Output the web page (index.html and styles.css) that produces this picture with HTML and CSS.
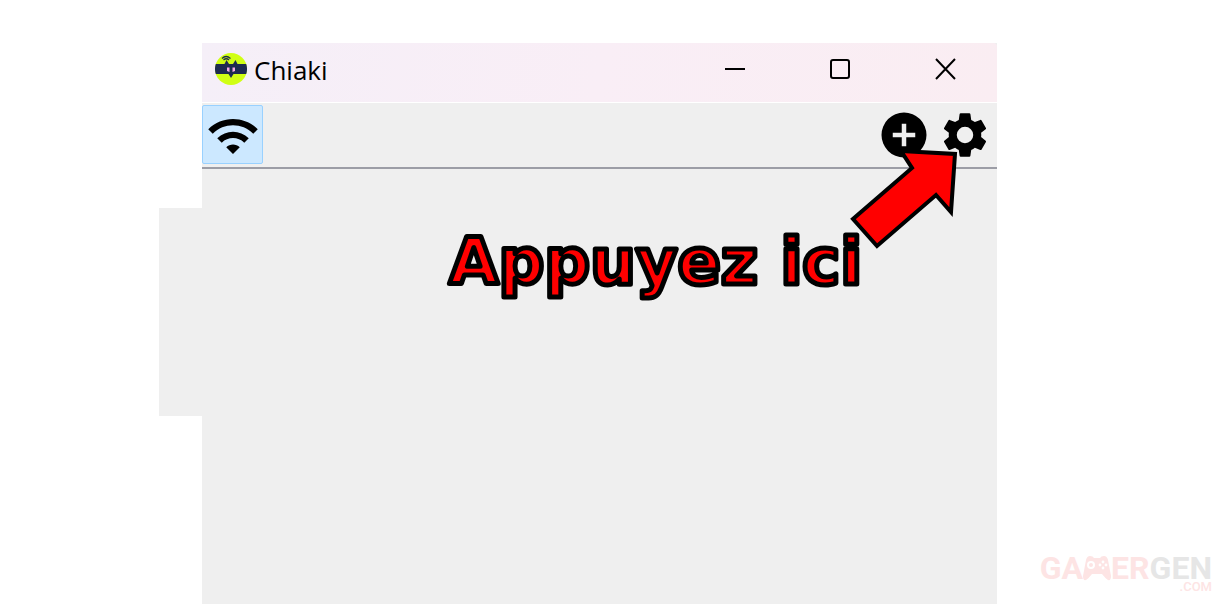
FILE: index.html
```html
<!DOCTYPE html>
<html lang="fr">
<head>
<meta charset="utf-8">
<meta name="viewport" content="width=device-width, initial-scale=1">
<title>Chiaki</title>
<link rel="stylesheet" href="styles.css">
</head>
<body>
<div class="page">
  <div class="margin-left"><div class="tab"></div></div>
  <main class="window">
    <header class="titlebar">
      <svg class="logo" viewBox="0 0 32 32" aria-hidden="true">
        <circle cx="16" cy="16" r="16" fill="#d0ff14"/>
        <path d="M.8 11h8.700l2-4 2.500 4h4l2.500-4 2 4h8.700a16 16 0 0 1 0 10H18.500L16 25l-2.500-4H.8a16 16 0 0 1 0-10z" fill="#1d2b50"/>
        <path d="M12 14.500h2.500V19L12 18zM17.500 14.500H20V18l-2.500 1z" fill="#f4a9e4"/>
        <path d="M7 5.500q4-4 8.500 0M8.500 7q2.700-2.500 5.500 0" fill="none" stroke="#1d2b50" stroke-width="1.200"/>
      </svg>
      <h1 class="title">Chiaki</h1>
      <div class="caption">
        <button class="caption-button" aria-label="Réduire"><svg width="22" height="22" viewBox="0 0 22 22"><path d="M1 11h20" class="line"/></svg></button>
        <button class="caption-button" aria-label="Agrandir"><svg width="22" height="22" viewBox="0 0 22 22"><rect x="2" y="2" width="18" height="18" rx="2" class="line"/></svg></button>
        <button class="caption-button" aria-label="Fermer"><svg width="22" height="22" viewBox="0 0 22 22"><path d="M2 1l19 20M21 1L2 21" class="line"/></svg></button>
      </div>
    </header>
    <div class="toolbar">
      <button class="tool active" aria-label="Découverte"><svg width="54" height="54" viewBox="0 0 24 24"><path d="M1 9l2 2c4.970-4.970 13.030-4.970 18 0l2-2C16.930 2.930 7.080 2.930 1 9zm8 8l3 3 3-3c-1.650-1.660-4.340-1.660-6 0zm-4-4l2 2c2.760-2.760 7.240-2.760 10 0l2-2C15.140 9.140 8.870 9.140 5 13z"/></svg></button>
      <span class="spacer"></span>
      <button class="tool" aria-label="Ajouter"><svg width="54" height="54" viewBox="0 0 24 24"><path d="M12 2a10 10 0 1 0 0 20 10 10 0 0 0 0-20zm5 11h-4v4h-2v-4H7v-2h4V7h2v4h4z"/></svg></button>
      <button class="tool" aria-label="Paramètres"><svg width="52" height="52" viewBox="0 0 24 24"><path d="M12 15.800A3.800 3.800 0 0 1 8.200 12 3.800 3.800 0 0 1 12 8.200a3.800 3.800 0 0 1 3.800 3.800 3.800 3.800 0 0 1-3.800 3.800m7.430-2.830c.04-.32.07-.64.07-.97s-.03-.66-.07-1l2.110-1.630c.19-.15.24-.42.12-.64l-2-3.460c-.12-.22-.39-.31-.61-.22l-2.490 1c-.52-.39-1.060-.73-1.690-.98l-.37-2.650A.506.506 0 0 0 14 2h-4c-.25 0-.46.18-.5.42l-.37 2.650c-.63.25-1.170.59-1.690.98l-2.490-1c-.22-.09-.49 0-.61.22l-2 3.460c-.13.22-.07.49.12.64L4.570 11c-.04.34-.07.67-.07 1s.03.65.07.97l-2.110 1.660c-.19.15-.25.42-.12.64l2 3.460c.12.22.39.3.61.22l2.490-1.010c.52.4 1.060.74 1.690.99l.37 2.650c.04.24.25.42.5.42h4c.25 0 .46-.18.5-.42l.37-2.650c.63-.26 1.170-.59 1.690-.99l2.490 1.010c.22.08.49 0 .61-.22l2-3.460c.12-.22.07-.49-.12-.64z"/></svg></button>
    </div>
    <svg class="note" width="430" height="80" viewBox="0 0 430 80"><text x="10" y="59">Appuyez ici</text></svg>
    <svg class="arrow" width="120" height="110" viewBox="842 146 120 110" aria-hidden="true"><path d="M901 151L955 154 951 212 936 195 877 246 853 219 912 168z"/></svg>
  </main>
  <aside class="margin-right">
    <div class="watermark">
      <div class="brand"><span>GA</span><svg width="28" height="26" viewBox="0 0 28 26" aria-hidden="true"><path d="M7 1q3 0 4 2h6q1-2 4-2 3 0 4 4l3 16q0 5-3 4-3-2-6-6H9q-3 4-6 6-3 1-3-4L3 5q1-4 4-4z" fill="#fde4e4"/><circle cx="8" cy="10" r="3" fill="none" stroke="#fff" stroke-width="2"/><g fill="#fff"><circle cx="20" cy="7" r="1.400"/><circle cx="17" cy="10" r="1.400"/><circle cx="23" cy="10" r="1.400"/><circle cx="20" cy="13" r="1.400"/></g></svg><span>ER</span><span class="gray">GEN</span></div>
      <div class="domain">.COM</div>
    </div>
  </aside>
</div>
</body>
</html>
```
FILE: styles.css
```css
* { box-sizing: border-box; }
body {
  margin: 0;
  background: #fff;
  font-family: "Open Sans", "Noto Sans", sans-serif;
}
.page {
  display: grid;
  grid-template-columns: 202px 1fr 229px;
  min-height: 100vh;
}
.margin-left {
  display: flex;
  justify-content: flex-end;
  padding-top: 208px;
}
.tab {
  width: 43px;
  height: 208px;
  background: #efefef;
}
.window {
  position: relative;
  margin-top: 43px;
  background: #efefef;
}
.titlebar {
  display: flex;
  align-items: center;
  height: 60px;
  padding-left: 13px;
  padding-bottom: 8px;
  border-bottom: 1px solid #fff;
  border-top-right-radius: 4px;
  background: linear-gradient(100deg, #f5eff8, #f9eef6 50%, #faedf2);
}
.logo {
  width: 32px;
  height: 32px;
  margin-right: 7px;
}
.title {
  margin: 0;
  padding-top: 2px;
  font-size: 26px;
  line-height: 36px;
  font-weight: 400;
}
.caption {
  display: flex;
  margin-left: auto;
}
.caption-button {
  display: grid;
  place-items: center;
  width: 105px;
  height: 50px;
  padding: 0;
  border: 0;
  background: none;
}
.line {
  fill: none;
  stroke: #000;
  stroke-width: 2;
}
.toolbar {
  display: flex;
  padding: 2px 2px 3px 0;
  border-bottom: 2px solid #9c9da6;
}
.tool {
  display: grid;
  place-items: center;
  width: 61px;
  height: 59px;
  padding: 0;
  border: 1px solid transparent;
  border-radius: 2px;
  background: none;
}
.active {
  padding-top: 2px;
  border-color: #99d1ff;
  background: #cce8ff;
}
.spacer { flex: 1; }
.note {
  position: absolute;
  top: 182px;
  right: 128px;
}
.note text {
  font: bold 64px "DejaVu Sans", sans-serif;
  fill: #f00;
  stroke: #000;
  stroke-width: 5px;
  stroke-linejoin: round;
}
.arrow {
  position: absolute;
  top: 103px;
  right: 35px;
  fill: #f00;
  stroke: #000;
  stroke-width: 4px;
}
.margin-right {
  display: flex;
  align-items: flex-end;
  justify-content: flex-end;
  padding: 0 14px 12px 0;
}
.watermark {
  color: #fde4e4;
  font-family: Roboto, sans-serif;
}
.brand {
  display: flex;
  align-items: center;
  font-size: 32px;
  line-height: 28px;
  font-weight: 700;
}
.gray { color: #e6e6e6; }
.domain {
  font-size: 13px;
  line-height: 10px;
  font-weight: 500;
  text-align: right;
}
```
